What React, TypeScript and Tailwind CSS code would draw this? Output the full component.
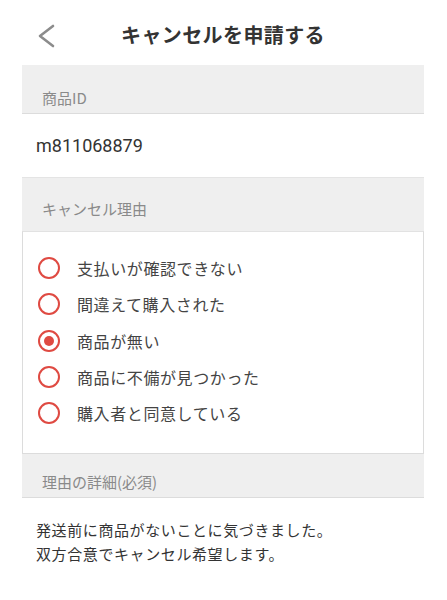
import React from 'react';

const reasons = [
  '支払いが確認できない',
  '間違えて購入された',
  '商品が無い',
  '商品に不備が見つかった',
  '購入者と同意している',
];

const font = { fontFamily: '"Noto Sans CJK JP", "Noto Sans", sans-serif' };

const SectionLabel: React.FC<{ children: React.ReactNode; className: string }> = ({ children, className }) => (
  <div className={`bg-[#efefef] pl-[20px] text-[15px] leading-[20px] text-[#8a8a8a] ${className}`}>{children}</div>
);

const App: React.FC = () => {
  return (
    <div className="min-h-[600px] bg-white" style={font}>
      <div className="mx-[22px] w-[402px]">
        {/* Header */}
        <header className="grid h-[65px] grid-cols-[60px_1fr_60px] items-center">
          <svg width="20" height="24" viewBox="0 0 20 24" className="ml-[15px] mt-[6px]">
            <polyline points="16,2 3,12 16,22" fill="none" stroke="#8c8c8c" strokeWidth="2.6" strokeLinecap="round" strokeLinejoin="round" />
          </svg>
          <h1 className="mt-[4px] text-center text-[20px] font-bold leading-[28px] tracking-[0.4px] text-[#333]">
            キャンセルを申請する
          </h1>
          <div />
        </header>

        <SectionLabel className="border-b border-[#dcdcdc] pt-[23px] pb-[5px]">商品ID</SectionLabel>
        <div className="flex h-[63px] items-center pl-[14px] text-[18px] text-[#333]" style={{ fontFamily: 'Roboto, "Noto Sans CJK JP", sans-serif' }}>
          m811068879
        </div>

        <SectionLabel className="border-t border-[#e4e4e4] pt-[21px] pb-[12px]">キャンセル理由</SectionLabel>
        <div className="border border-t-[#e2e2e2] border-[#dcdcdc] pt-[18px] pb-[22px] pl-[15px]">
          {reasons.map((r, i) => (
            <label key={r} className="flex h-[36.3px] items-center gap-[17px]">
              <span className="flex h-[22px] w-[22px] items-center justify-center rounded-full border-[2.5px] border-[#df4a42]">
                {i === 2 && <span className="h-[10px] w-[10px] rounded-full bg-[#df4a42]" />}
              </span>
              <span className="text-[16px] leading-[22px] tracking-[0.6px] text-[#444]">{r}</span>
            </label>
          ))}
        </div>

        <SectionLabel className="border-b border-[#dcdcdc] pt-[18px] pb-[5px]">理由の詳細(必須)</SectionLabel>
        <p className="pt-[20px] pl-[14px] text-[15px] leading-[24px] tracking-[0.6px] text-[#333]">
          発送前に商品がないことに気づきました。
          <br />
          双方合意でキャンセル希望します。
        </p>
      </div>
    </div>
  );
};

export default App;
